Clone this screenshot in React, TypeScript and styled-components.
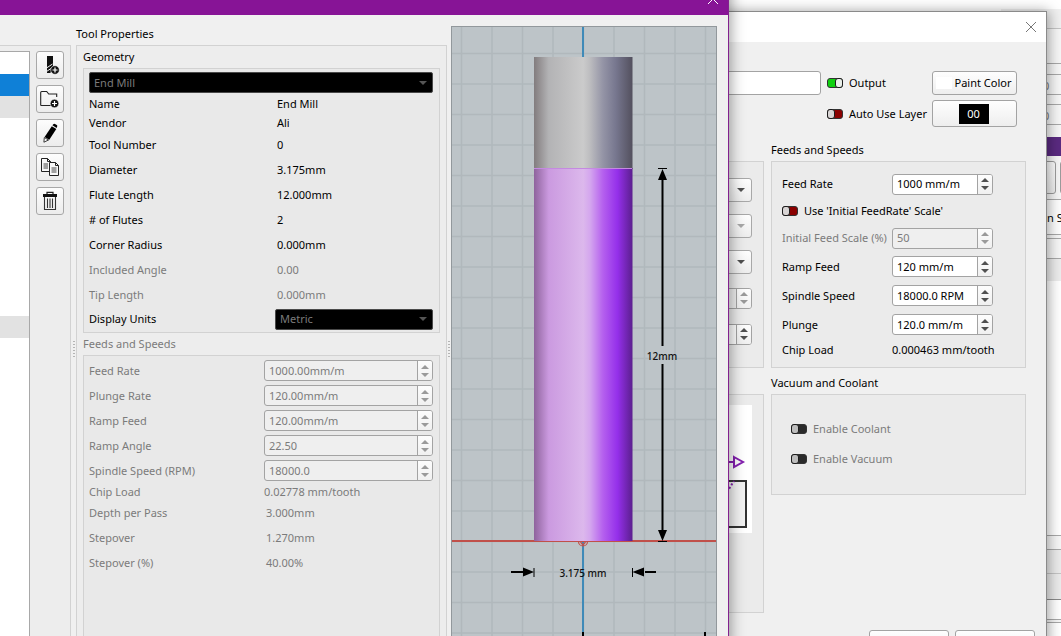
import React from "react";
import styled, { createGlobalStyle, css } from "styled-components";

const GlobalStyle = createGlobalStyle`
  *, *::before, *::after { box-sizing: border-box; }
  html, body, #root { height: 100%; }
  body {
    margin: 0;
    overflow: hidden;
    background: #fff;
    color: #000;
    font: 11px/16px "Noto Sans", "Open Sans", sans-serif;
  }
  input, select, button { font: inherit; color: inherit; margin: 0; }
`;

const Desktop = styled.div`
  position: relative;
  height: 100vh;
  overflow: hidden;
`;

/* ---------- application behind the dialogs ---------- */

const BackApp = styled.aside`
  display: flex;
  flex-direction: column;
  width: 60px;
  height: 100%;
  margin-left: auto;
  padding-top: 9px;
  background: linear-gradient(#fff 0 9px, #f0f0f0 9px);
`;

const Strip = styled.div<{ $h: number; $bg?: string; $line?: string }>`
  flex: none;
  height: ${(p) => p.$h}px;
  padding-left: 46px;
  line-height: ${(p) => p.$h}px;
  white-space: nowrap;
  overflow: hidden;
  background: ${(p) => p.$bg ?? "#f6f6f6"};
  border-top: 1px solid ${(p) => p.$line ?? "transparent"};
`;

const BackField = styled(Strip)`
  padding-left: 42px;
  color: #777;
  border-bottom: 1px solid #a8a8a8;
`;

const BackButtons = styled(Strip)`
  display: flex;
  gap: 4px;
  padding: 4px 0 5px 20px;
`;

const BackButton = styled.button`
  flex: none;
  width: 35px;
  border: 1px solid #9c9c9c;
  border-radius: 3px;
  background: linear-gradient(#fdfdfd, #eee);
`;

/* ---------- windows ---------- */

const CutWindow = styled.section`
  position: absolute;
  top: 11px;
  right: 14px;
  bottom: -30px;
  width: 420px;
  display: flex;
  flex-direction: column;
  border: 1px solid #8a8a8a;
  background: #f0f0f0;
  box-shadow: 0 2px 12px 2px rgba(0, 0, 0, 0.36);
`;

const CutTitle = styled.header`
  display: flex;
  align-items: center;
  justify-content: flex-end;
  height: 30px;
  flex: none;
  padding-right: 9px;
  background: #fff;
`;

const ToolWindow = styled.section`
  position: absolute;
  top: -17px;
  left: 0;
  right: 332px;
  bottom: -10px;
  display: flex;
  flex-direction: column;
  border-right: 1px solid #83218f;
  background: #f0f0f0;
  box-shadow: 0 2px 14px 1px rgba(0, 0, 0, 0.42);
`;

const ToolTitle = styled.header`
  display: flex;
  align-items: center;
  justify-content: flex-end;
  height: 32px;
  flex: none;
  padding-right: 9px;
  color: #fff;
  background: #871496;
`;

const CloseButton = styled.button`
  display: flex;
  padding: 0;
  border: 0;
  background: none;
`;

const Cross = ({ color }: { color: string }) => (
  <svg width="12" height="12" viewBox="0 0 12 12" fill="none" stroke={color} strokeWidth="1">
    <path d="M1 1l10 10M11 1L1 11" />
  </svg>
);

/* ---------- shared controls ---------- */

const Group = styled.div`
  border: 1px solid #d2d2d2;
  background: #ebebeb;
`;

const Caption = styled.h2<{ $dim?: boolean; $gap?: number }>`
  margin: ${(p) => p.$gap ?? 0}px 0 0;
  height: 22px;
  font-size: 11px;
  line-height: 22px;
  font-weight: 400;
  color: ${(p) => (p.$dim ? "#7b7b7b" : "#000")};
`;

const faded = css`
  color: #7b7b7b;
`;

const Row = styled.div<{ $h: number; $dim?: boolean; $col: number }>`
  display: grid;
  grid-template-columns: ${(p) => p.$col}px 1fr;
  align-items: center;
  height: ${(p) => p.$h}px;
  white-space: nowrap;
  ${(p) => p.$dim && faded}
`;

const Value = styled.output<{ $inset?: boolean }>`
  padding-left: ${(p) => (p.$inset ? 2 : 0)}px;
`;

const SpinBox = styled.span<{ $off?: boolean }>`
  display: flex;
  height: 21px;
  overflow: hidden;
  border: 1px solid #a3a3a3;
  border-radius: 3px;
  background: ${(p) => (p.$off ? "#efefef" : "#fff")};
`;

const SpinInput = styled.input`
  flex: 1;
  min-width: 0;
  padding: 0 4px;
  border: 0;
  outline: 0;
  background: none;
  &:disabled { color: #7b7b7b; }
`;

const SpinButtons = styled.span`
  display: flex;
  flex-direction: column;
  flex: none;
  width: 15px;
  border-left: 1px solid #a3a3a3;
  background: linear-gradient(#fdfdfd, #f0f0f0);
`;

const SpinButton = styled.button<{ $down?: boolean }>`
  display: flex;
  flex: 1;
  align-items: ${(p) => (p.$down ? "flex-start" : "flex-end")};
  justify-content: center;
  padding: 2px 0;
  border: 0;
  background: none;
`;

function Spin({ id, value, off, label }: { id: string; value: string; off?: boolean; label?: string }) {
  const fill = off ? "#9a9a9a" : "#505050";
  return (
    <SpinBox $off={off}>
      <SpinInput id={id} defaultValue={value} disabled={off} aria-label={label} />
      <SpinButtons>
        <SpinButton aria-label="Increase" disabled={off}>
          <svg width="8" height="4" viewBox="0 0 8 4"><path d="M0 4L4 0L8 4Z" fill={fill} /></svg>
        </SpinButton>
        <SpinButton $down aria-label="Decrease" disabled={off}>
          <svg width="8" height="4" viewBox="0 0 8 4"><path d="M0 0L4 4L8 0Z" fill={fill} /></svg>
        </SpinButton>
      </SpinButtons>
    </SpinBox>
  );
}

const ComboBox = styled.span<{ $dark?: boolean }>`
  display: grid;
  align-items: center;
  height: ${(p) => (p.$dark ? 21 : 24)}px;
  border: 1px solid ${(p) => (p.$dark ? "#4a4a4a" : "#a8a8a8")};
  border-radius: ${(p) => (p.$dark ? 2 : 3)}px;
  background: ${(p) => (p.$dark ? "#000" : "linear-gradient(#fefefe, #ededed)")};
  > * { grid-area: 1 / 1; }
  > svg { justify-self: end; margin-right: ${(p) => (p.$dark ? 5 : 6)}px; pointer-events: none; }
`;

const ComboSelect = styled.select`
  appearance: none;
  width: 100%;
  padding: 0 4px;
  border: 0;
  background: none;
  &:disabled { color: #7b7b7b; opacity: 1; }
`;

function Combo({ id, value, dark, off, label }: { id: string; value: string; dark?: boolean; off?: boolean; label?: string }) {
  return (
    <ComboBox $dark={dark}>
      <ComboSelect id={id} disabled={off} aria-label={label}>
        <option>{value}</option>
      </ComboSelect>
      <svg width="8" height="4" viewBox="0 0 8 4">
        <path d="M0 0H8L4 4Z" fill={dark ? "#555" : off ? "#a8a8a8" : "#505050"} />
      </svg>
    </ComboBox>
  );
}

const Switch = styled.input<{ $off?: boolean }>`
  appearance: none;
  position: relative;
  flex: none;
  width: 16px;
  height: 10px;
  border: 1px solid #333;
  border-radius: 3px;
  background: ${(p) => (p.$off ? "#2a2a2a" : "#8b0000")};
  &:checked { background: #10d010; }
  &::before {
    content: "";
    position: absolute;
    top: -1px;
    left: -1px;
    width: 8px;
    height: 10px;
    border: 1px solid #1c1c1c;
    border-radius: 3px;
    background: ${(p) => (p.$off ? "#bdbdbd" : "#d9d5d5")};
  }
  &:checked::before { left: 7px; background: #e9efe9; }
`;

const SwitchLabel = styled.label<{ $h: number; $dim?: boolean }>`
  display: flex;
  align-items: center;
  gap: 6px;
  height: ${(p) => p.$h}px;
  white-space: nowrap;
  ${(p) => p.$dim && faded}
`;

const PushButton = styled.button<{ $h: number }>`
  display: flex;
  align-items: center;
  justify-content: center;
  gap: 3px;
  width: 85px;
  height: ${(p) => p.$h}px;
  padding: 0 2px 0 0;
  border: 1px solid #a3a3a3;
  border-radius: 3px;
  background: linear-gradient(#fefefe, #eee);
  white-space: nowrap;
`;

/* ---------- cut settings window ---------- */

const CutBody = styled.div`
  display: flex;
  flex-direction: column;
  flex: 1;
  padding: 29px 11px 0 8px;
`;

const TopGrid = styled.div`
  display: grid;
  grid-template-columns: 1fr 105px 85px;
  grid-template-rows: 24px 27px;
  row-gap: 5px;
  align-items: center;
  padding-right: 18px;
`;

const NameInput = styled.input`
  grid-row: 1;
  height: 24px;
  margin-right: 6px;
  border: 1px solid #a3a3a3;
  border-radius: 3px;
  background: #fff;
`;

const Swatch = styled.span`
  width: 16px;
  height: 12px;
  background: #fff;
`;

const LayerChip = styled.span`
  width: 30px;
  height: 20px;
  line-height: 20px;
  background: #000;
  color: #fff;
`;

const CutColumns = styled.div`
  display: grid;
  grid-template-columns: 1fr 255px;
  gap: 7px;
  padding: 12px 9px 0 0;
`;

const SideColumn = styled.div`
  min-width: 0;
`;

const SideGroup = styled(Group)<{ $h: number; $mt: number }>`
  height: ${(p) => p.$h}px;
  margin-top: ${(p) => p.$mt}px;
  padding-right: 11px;
`;

const SideControls = styled.div`
  display: grid;
  grid-auto-rows: 36px;
  align-items: center;
  padding-top: 10px;
`;

const Diagram = styled.svg`
  display: block;
  margin-top: 10px;
  margin-left: auto;
  background: #fff;
`;

const FeedGroup = styled(Group)`
  height: 207px;
  padding: 8px 32px 0 10px;
`;

const VacuumGroup = styled(Group)`
  height: 101px;
  padding: 19px 19px 0;
`;

const CutFooter = styled.footer`
  display: flex;
  justify-content: flex-end;
  gap: 6px;
  margin-top: auto;
  padding-bottom: 11px;
`;

const FooterButton = styled(PushButton)`
  width: 80px;
`;

/* ---------- tool library window ---------- */

const ToolBody = styled.div`
  display: grid;
  grid-template-columns: 71px 5px 371px 4px 1fr;
  flex: 1;
  min-height: 0;
  padding: 11px 11px 0 0;
`;

const LibraryGroup = styled(Group)`
  display: flex;
  gap: 6px;
  margin-top: 19px;
  padding-top: 5px;
  border-left: 0;
  background: #ededed;
`;

const ToolList = styled.ul`
  width: 30px;
  margin: 0;
  padding: 0;
  list-style: none;
  background: #fff;
  border: 1px solid #a8a8a8;
  border-left: 0;
`;

const ToolItem = styled.li<{ $state?: string }>`
  height: 22px;
  background: ${(p) => (p.$state === "picked" ? "#0f80d7" : p.$state === "group" ? "#e2e2e2" : "#fff")};
`;

const ToolActions = styled.nav`
  display: flex;
  flex-direction: column;
  gap: 6px;
`;

const ActionButton = styled.button`
  display: flex;
  align-items: center;
  justify-content: center;
  width: 28px;
  height: 28px;
  padding: 0;
  border: 1px solid #a8a8a8;
  border-radius: 3px;
  background: linear-gradient(#fdfdfd, #ececec);
`;

const Splitter = styled.div`
  align-self: center;
  justify-self: center;
  width: 2px;
  height: 18px;
  margin-top: 28px;
  background: repeating-linear-gradient(#b4b4b4 0 1px, transparent 1px 3px);
`;

const Properties = styled.div`
  display: flex;
  flex-direction: column;
  min-height: 0;
`;

const PropertiesTitle = styled(Caption)`
  height: 19px;
  line-height: 16px;
`;

const PropertiesGroup = styled(Group)`
  flex: 1;
  display: flex;
  flex-direction: column;
  padding: 0 6px;
  border-bottom: 0;
  background: #ededed;
`;

const GeometryGroup = styled(Group)`
  height: 265px;
  padding: 3px 6px 0 5px;
  background: #e9e9e9;
`;

const SpeedGroup = styled(Group)`
  flex: 1;
  padding: 2px 6px 0 5px;
  border-bottom: 0;
  background: #e9e9e9;
`;

const Preview = styled.svg`
  display: block;
  width: 100%;
  height: 100%;
  min-height: 0;
  border: 1px solid #92989c;
  border-bottom: 0;
  background: #bdc4c8;
`;

type Entry = { label: string; value: string; h: number; dim?: boolean };

const geometry: Entry[] = [
  { label: "Name", value: "End Mill", h: 22 },
  { label: "Vendor", value: "Ali", h: 16 },
  { label: "Tool Number", value: "0", h: 27 },
  { label: "Diameter", value: "3.175mm", h: 24 },
  { label: "Flute Length", value: "12.000mm", h: 25 },
  { label: "# of Flutes", value: "2", h: 25 },
  { label: "Corner Radius", value: "0.000mm", h: 25 },
  { label: "Included Angle", value: "0.00", h: 25, dim: true },
  { label: "Tip Length", value: "0.000mm", h: 25, dim: true },
];

const speedFields = [
  ["Feed Rate", "1000.00mm/m"],
  ["Plunge Rate", "120.00mm/m"],
  ["Ramp Feed", "120.00mm/m"],
  ["Ramp Angle", "22.50"],
  ["Spindle Speed (RPM)", "18000.0"],
];

const passes = [
  ["Depth per Pass", "3.000mm"],
  ["Stepover", "1.270mm"],
  ["Stepover (%)", "40.00%"],
];

const listRows = ["", "picked", "group", "", "", "", "", "", "", "", "", "", "group"];

const PlusBadge = ({ x, y }: { x: number; y: number }) => (
  <g>
    <circle cx={x} cy={y} r="4.300" fill="#111" stroke="#f8f8f8" strokeWidth="0.600" />
    <path d={`M${x - 2.5} ${y}h5M${x} ${y - 2.5}v5`} stroke="#fff" strokeWidth="1.200" />
  </g>
);

const icons = [
  {
    name: "Add tool",
    art: (
      <>
        <path d="M7 1h6v8H7zM7 9h6v6l-3 3H7z" fill="#111" />
        <path d="M6.500 13l6-4M6.500 16.500l6-4" stroke="#f4f4f4" strokeWidth="1" />
        <PlusBadge x={15} y={15} />
      </>
    ),
  },
  {
    name: "Add folder",
    art: (
      <>
        <path d="M.7 16.500V3.500q0-1 1-1h5l2 2.500h8v3M.7 16.500h11" fill="none" stroke="#222" strokeWidth="1.100" />
        <PlusBadge x={14.5} y={14.5} />
      </>
    ),
  },
  {
    name: "Edit",
    art: (
      <>
        <path d="M11.800 3.300l4.500 2.700-7 10.800-4.700-2.800z" fill="#000" />
        <path d="M12.400 2.300l.9-1.100q.8-.7 1.700-.2l1.800 1.100q.8.700.4 1.500l-.6 1.300z" fill="#000" />
        <path d="M4.300 14.500l4.200 2.500-4.600 2.200z" fill="#fff" stroke="#222" strokeWidth=".9" />
      </>
    ),
  },
  {
    name: "Duplicate",
    art: (
      <>
        <g fill="#f8f8f8" stroke="#222" strokeWidth="1">
          <path d="M1.500 1.500h6l3 3v10h-9zM7.500 1.500v3h3" />
          <path d="M9.500 5.500h6l3 3v10h-9zM15.500 5.500v3h3" />
        </g>
        <path d="M3.500 7h4.500M3.500 9h4.500M3.500 11h4.500M11.500 11h5M11.500 13h5M11.500 15h5" stroke="#333" strokeWidth=".9" />
      </>
    ),
  },
  {
    name: "Delete",
    art: (
      <>
        <path d="M7 3V1.300h6V3" fill="none" stroke="#222" strokeWidth="1.200" />
        <path d="M3 3h14v3H3z" fill="#111" />
        <path d="M4.500 6v12.500h11V6M7.500 7.500v9.500M10 7.500v9.500M12.500 7.500v9.500" fill="none" stroke="#333" strokeWidth="1.100" />
      </>
    ),
  },
];

const steps = (from: number, to: number, size: number) => {
  const out: number[] = [];
  for (let v = from; v <= to; v += size) out.push(v);
  return out;
};

function ToolPreview() {
  return (
    <Preview viewBox="0 0 264 619" preserveAspectRatio="xMidYMin slice" role="img" aria-label="Tool preview">
      <defs>
        <linearGradient id="shank">
          <stop offset="0" stopColor="#827c7e" />
          <stop offset=".15" stopColor="#b3b3b5" />
          <stop offset=".5" stopColor="#cbcbcb" />
          <stop offset=".56" stopColor="#bfbfc1" />
          <stop offset=".7" stopColor="#9494a6" />
          <stop offset=".83" stopColor="#77778f" />
          <stop offset="1" stopColor="#53505e" />
        </linearGradient>
        <linearGradient id="flute">
          <stop offset="0" stopColor="#8e639c" />
          <stop offset=".15" stopColor="#cb9ae0" />
          <stop offset=".5" stopColor="#dcb8ec" />
          <stop offset=".57" stopColor="#d4a6ee" />
          <stop offset=".7" stopColor="#b560ee" />
          <stop offset=".85" stopColor="#942fea" />
          <stop offset="1" stopColor="#5b1f8e" />
        </linearGradient>
      </defs>
      <g stroke="#b1b8bc" strokeWidth="1.500">
        {steps(9.5, 265, 30.5).map((x) => <path key={x} d={`M${x} 0V619`} />)}
        {steps(26.5, 619, 30.5).map((y) => <path key={y} d={`M0 ${y}H265`} />)}
      </g>
      <path d="M131 0V30M131 514V619" stroke="#3f8ab8" strokeWidth="2" />
      <path d="M0 514H265" stroke="#c0504a" strokeWidth="2" />
      <rect x="82" y="30" width="98.500" height="112" fill="url(#shank)" />
      <rect x="82" y="141" width="98.500" height="373" fill="url(#flute)" />
      <path d="M82 141.500H180" stroke="#c48ae0" />
      <path d="M126.500 514.500a4.500 4.500 0 0 0 9 0M128.500 515l2.500 3 2.500-3" fill="none" stroke="#c0504a" strokeWidth="1.200" />
      <g stroke="#000" strokeWidth="2" fill="#000">
        <path d="M210.500 150V319M210.500 337V506M59 545H73M193 545H204" />
        <path d="M206 141.500H215M206 514.500H215M82 541V550M180.500 541V550" strokeWidth="1" />
        <path d="M210.500 142L215 153H206ZM210.500 514L215 503H206ZM82 545L71 540.500V549.500ZM180.500 545L192 540.500V549.500Z" stroke="none" />
        <path d="M131 605V619M253 605V619" />
      </g>
      <g fontSize="10" fontWeight="500" textAnchor="middle" fill="#111">
        <text x="210" y="333">12mm</text>
        <text x="131" y="550">3.175 mm</text>
      </g>
    </Preview>
  );
}

export default function App() {
  return (
    <Desktop>
      <GlobalStyle />
      <BackApp>
        <Strip $h={19} $bg="#f0f0f0" />
        <Strip $h={35} $line="#c4c4c4" />
        <Strip $h={11} $line="#a8a8a8" />
        <BackField $h={21} $line="#a8a8a8">0</BackField>
        <Strip $h={9} />
        <BackField $h={21} $line="#a8a8a8">0</BackField>
        <Strip $h={12} />
        <Strip $h={19} $bg="#5a2a80" />
        <BackButtons $h={43}>
          <BackButton aria-label="Previous" />
          <BackButton aria-label="Next" />
        </BackButtons>
        <Strip $h={35} $bg="#fdfdfd" $line="#a8a8a8">n S</Strip>
        <Strip $h={4} $line="#a8a8a8" />
        <Strip $h={20} $line="#a8a8a8" />
        <Strip $h={23} $bg="#ececec" $line="#a8a8a8" />
        <Strip $h={254} $bg="#fff" />
        <Strip $h={14} $line="#a8a8a8" />
        <Strip $h={24} $bg="#ebebeb" $line="#a8a8a8" />
        <Strip $h={26} $bg="#ebebeb" $line="#c4c4c4" />
        <Strip $h={20} $bg="#fff" $line="#8a8a8a" />
        <Strip $h={3} $line="#a8a8a8" />
        <Strip $h={20} $bg="#fff" $line="#a8a8a8" />
      </BackApp>

      <CutWindow aria-label="Cut settings">
        <CutTitle>
          <CloseButton aria-label="Close"><Cross color="#777" /></CloseButton>
        </CutTitle>
        <CutBody>
          <TopGrid>
            <NameInput aria-label="Setting name" />
            <SwitchLabel $h={20}><Switch type="checkbox" defaultChecked />Output</SwitchLabel>
            <PushButton $h={24}><Swatch />Paint Color</PushButton>
            <span />
            <SwitchLabel $h={20}><Switch type="checkbox" />Auto Use Layer</SwitchLabel>
            <PushButton $h={27}><LayerChip>00</LayerChip></PushButton>
          </TopGrid>
          <CutColumns>
            <SideColumn>
              <SideGroup $h={207} $mt={22}>
                <SideControls>
                  <Combo id="side-a" value="" label="Direction" />
                  <Combo id="side-b" value="" off label="Start" />
                  <Combo id="side-c" value="" label="Method" />
                  <Spin id="side-d" value="" off label="Offset" />
                  <Spin id="side-e" value="" label="Passes" />
                </SideControls>
              </SideGroup>
              <SideGroup $h={219} $mt={26}>
                <Diagram width="110" height="128" viewBox="20 0 110 128">
                  <path d="M95 57H112M112 52L121 57L112 62Z" fill="#fff" stroke="#8420b0" strokeWidth="2" />
                  <path d="M60 76H124V122H60" fill="#f2f2f2" stroke="#333" strokeWidth="2" />
                  <path d="M105 87L112 76" stroke="#8420b0" strokeWidth="2" strokeDasharray="2 2" />
                </Diagram>
              </SideGroup>
            </SideColumn>
            <div>
              <Caption>Feeds and Speeds</Caption>
              <FeedGroup>
                <Row $h={28} $col={110}><label htmlFor="feed">Feed Rate</label><Spin id="feed" value="1000 mm/m" /></Row>
                <SwitchLabel $h={26}><Switch type="checkbox" />Use 'Initial FeedRate' Scale'</SwitchLabel>
                <Row $h={28} $col={110} $dim><label htmlFor="scale">Initial Feed Scale (%)</label><Spin id="scale" value="50" off /></Row>
                <Row $h={29} $col={110}><label htmlFor="ramp">Ramp Feed</label><Spin id="ramp" value="120 mm/m" /></Row>
                <Row $h={29} $col={110}><label htmlFor="spindle">Spindle Speed</label><Spin id="spindle" value="18000.0 RPM" /></Row>
                <Row $h={29} $col={110}><label htmlFor="plunge">Plunge</label><Spin id="plunge" value="120.0 mm/m" /></Row>
                <Row $h={22} $col={110}><span>Chip Load</span><Value>0.000463 mm/tooth</Value></Row>
              </FeedGroup>
              <Caption $gap={4}>Vacuum and Coolant</Caption>
              <VacuumGroup>
                <SwitchLabel $h={30} $dim><Switch type="checkbox" disabled $off />Enable Coolant</SwitchLabel>
                <SwitchLabel $h={30} $dim><Switch type="checkbox" disabled $off />Enable Vacuum</SwitchLabel>
              </VacuumGroup>
            </div>
          </CutColumns>
          <CutFooter>
            <FooterButton $h={24} aria-label="OK" />
            <FooterButton $h={24} aria-label="Cancel" />
          </CutFooter>
        </CutBody>
      </CutWindow>

      <ToolWindow aria-label="Tool library">
        <ToolTitle>
          <CloseButton aria-label="Close"><Cross color="#fff" /></CloseButton>
        </ToolTitle>
        <ToolBody>
          <LibraryGroup>
            <ToolList>
              {listRows.map((state, i) => <ToolItem key={i} $state={state} />)}
            </ToolList>
            <ToolActions>
              {icons.map((icon) => (
                <ActionButton key={icon.name} aria-label={icon.name}>
                  <svg width="20" height="20" viewBox="0 0 20 20">{icon.art}</svg>
                </ActionButton>
              ))}
            </ToolActions>
          </LibraryGroup>
          <Splitter />
          <Properties>
            <PropertiesTitle>Tool Properties</PropertiesTitle>
            <PropertiesGroup>
              <Caption>Geometry</Caption>
              <GeometryGroup>
                <Combo id="kind" value="End Mill" dark off label="Tool type" />
                {geometry.map((g) => (
                  <Row key={g.label} $h={g.h} $col={188} $dim={g.dim}>
                    <span>{g.label}</span>
                    <Value>{g.value}</Value>
                  </Row>
                ))}
                <Row $h={24} $col={186}>
                  <label htmlFor="units">Display Units</label>
                  <Combo id="units" value="Metric" dark off />
                </Row>
              </GeometryGroup>
              <Caption $dim>Feeds and Speeds</Caption>
              <SpeedGroup>
                {speedFields.map(([label, value], i) => (
                  <Row key={label} $h={25} $col={175} $dim>
                    <label htmlFor={`speed-${i}`}>{label}</label>
                    <Spin id={`speed-${i}`} value={value} off />
                  </Row>
                ))}
                <Row $h={17} $col={175} $dim><span>Chip Load</span><Value>0.02778 mm/tooth</Value></Row>
                {passes.map(([label, value]) => (
                  <Row key={label} $h={25} $col={175} $dim>
                    <span>{label}</span>
                    <Value $inset>{value}</Value>
                  </Row>
                ))}
              </SpeedGroup>
            </PropertiesGroup>
          </Properties>
          <Splitter />
          <ToolPreview />
        </ToolBody>
      </ToolWindow>
    </Desktop>
  );
}
